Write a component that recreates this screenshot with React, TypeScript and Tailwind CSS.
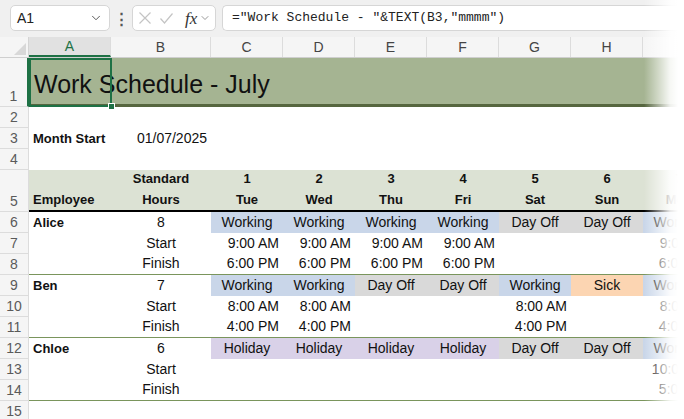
import { ChevronDown } from "lucide-react";

type Status = "W" | "O" | "H" | "S";

const STATUS: Record<Status, { label: string; bg: string }> = {
  W: { label: "Working", bg: "bg-[#c9d6e9]" },
  O: { label: "Day Off", bg: "bg-[#d9d9d9]" },
  H: { label: "Holiday", bg: "bg-[#d9d1e8]" },
  S: { label: "Sick", bg: "bg-[#fcd5b2]" },
};

const LETTERS = ["A", "B", "C", "D", "E", "F", "G", "H", "I"];
const WIDTHS = [
  "w-[82px]",
  "w-[100px]",
  "w-[72px]",
  "w-[72px]",
  "w-[72px]",
  "w-[72px]",
  "w-[72px]",
  "w-[72px]",
  "w-[72px]",
];

const DAYS = [
  { n: 1, d: "Tue" },
  { n: 2, d: "Wed" },
  { n: 3, d: "Thu" },
  { n: 4, d: "Fri" },
  { n: 5, d: "Sat" },
  { n: 6, d: "Sun" },
  { n: 7, d: "Mon" },
];

const PEOPLE: {
  name: string;
  hours: number;
  status: Status[];
  start: string[];
  finish: string[];
}[] = [
  {
    name: "Alice",
    hours: 8,
    status: ["W", "W", "W", "W", "O", "O", "W"],
    start: ["9:00 AM", "9:00 AM", "9:00 AM", "9:00 AM", "", "", "9:00 AM"],
    finish: ["6:00 PM", "6:00 PM", "6:00 PM", "6:00 PM", "", "", "6:00 PM"],
  },
  {
    name: "Ben",
    hours: 7,
    status: ["W", "W", "O", "O", "W", "S", "W"],
    start: ["8:00 AM", "8:00 AM", "", "", "8:00 AM", "", "8:00 AM"],
    finish: ["4:00 PM", "4:00 PM", "", "", "4:00 PM", "", "4:00 PM"],
  },
  {
    name: "Chloe",
    hours: 6,
    status: ["H", "H", "H", "H", "O", "O", "W"],
    start: ["", "", "", "", "", "", "10:00 AM"],
    finish: ["", "", "", "", "", "", "5:00 PM"],
  },
];

function RowHead({ n, className = "" }: { n: number; className?: string }) {
  return (
    <div
      className={`flex w-[29px] shrink-0 items-end justify-center border-r border-b border-[#dcdcdc] bg-[#f5f5f5] pb-[1px] text-[14px] leading-[17px] text-[#5a5a5a] ${className}`}
    >
      {n}
    </div>
  );
}

function Cell({
  col,
  align = "left",
  className = "",
  children,
}: {
  col: number;
  align?: "left" | "center" | "right";
  className?: string;
  children?: React.ReactNode;
}) {
  const a =
    align === "center"
      ? "justify-center"
      : align === "right"
        ? "justify-end pr-[4px]"
        : "justify-start pl-[4px]";
  return (
    <div
      className={`flex shrink-0 items-end whitespace-nowrap pb-[2px] leading-[17px] ${WIDTHS[col]} ${a} ${className}`}
    >
      {children}
    </div>
  );
}

function Row({
  n,
  h = "h-[21px]",
  line = "",
  children,
}: {
  n: number;
  h?: string;
  line?: string;
  children?: React.ReactNode;
}) {
  return (
    <div className={`flex ${h}`}>
      <RowHead n={n} />
      <div className={`flex flex-1 ${line}`}>{children}</div>
    </div>
  );
}

function PersonRows({ p, first }: { p: (typeof PEOPLE)[number]; first: number }) {
  return (
    <>
      <Row n={first}>
        <Cell col={0} className="text-[13px] font-bold">
          {p.name}
        </Cell>
        <Cell col={1} align="center">
          {p.hours}
        </Cell>
        {p.status.map((s, i) => (
          <Cell key={i} col={i + 2} align="center" className={STATUS[s].bg}>
            {STATUS[s].label}
          </Cell>
        ))}
      </Row>
      <Row n={first + 1}>
        <Cell col={0} />
        <Cell col={1} align="center">
          Start
        </Cell>
        {p.start.map((t, i) => (
          <Cell key={i} col={i + 2} align="right">
            {t}
          </Cell>
        ))}
      </Row>
      <Row n={first + 2} line="border-b-[1.5px] border-[#7a955c]">
        <Cell col={0} />
        <Cell col={1} align="center">
          Finish
        </Cell>
        {p.finish.map((t, i) => (
          <Cell key={i} col={i + 2} align="right">
            {t}
          </Cell>
        ))}
      </Row>
    </>
  );
}

export default function App() {
  return (
    <div className="relative h-[419px] w-[684px] overflow-hidden bg-white font-['Liberation_Sans',sans-serif] text-[14px] text-[#111]">
      {/* formula bar */}
      <div className="flex h-[37px] items-start gap-[4px] bg-[#f0f0f0] pl-[10px] pt-[5px]">
        <div className="flex h-[26px] w-[100px] items-center justify-between rounded-[5px] border border-[#d6d6d6] bg-white pl-[6px] pr-[6px] text-[14px] text-[#222]">
          <span>A1</span>
          <ChevronDown className="h-[14px] w-[14px] text-[#444]" strokeWidth={1.5} />
        </div>
        <div className="flex h-[26px] w-[14px] items-center justify-center text-[15px] font-bold leading-none text-[#555]">
          ⋮
        </div>
        <div className="flex h-[26px] w-[84px] items-center rounded-[5px] border border-[#d6d6d6] bg-white pl-[6px]">
          <svg width="12" height="12" viewBox="0 0 12 12" className="text-[#c4c4c4]">
            <path d="M0.5 0.5L11.5 11.5M11.5 0.5L0.5 11.5" stroke="currentColor" strokeWidth="1.2" fill="none" />
          </svg>
          <svg width="13" height="11" viewBox="0 0 13 11" className="ml-[9px] text-[#c4c4c4]">
            <path d="M0.5 5.5L4.5 10L12.5 0.5" stroke="currentColor" strokeWidth="1.2" fill="none" />
          </svg>
          <span className="ml-[12px] font-['Liberation_Serif',serif] text-[17px] italic leading-none text-[#333]">
            fx
          </span>
          <ChevronDown className="ml-[2px] h-[12px] w-[12px] text-[#777]" strokeWidth={1.5} />
        </div>
        <div className="ml-[2px] flex h-[26px] flex-1 items-center rounded-l-[5px] border border-r-0 border-[#d6d6d6] bg-white pl-[9px] font-['Liberation_Mono',monospace] text-[13px] text-[#222]">
          ="Work Schedule - "&amp;TEXT(B3,"mmmm")
        </div>
      </div>

      {/* column headers */}
      <div className="flex h-[21px] border-b border-[#cfcfcf] bg-[#f5f5f5] text-[14px] text-[#444]">
        <div className="relative w-[29px] shrink-0 border-r border-[#d4d4d4]">
          <div className="absolute right-[2px] bottom-[2px] h-0 w-0 border-b-[12px] border-l-[12px] border-b-[#d8d8d8] border-l-transparent" />
        </div>
        {LETTERS.map((l, i) => (
          <div
            key={l}
            className={`flex shrink-0 items-center justify-center border-r border-[#dcdcdc] ${WIDTHS[i]} ${
              i === 0
                ? "border-b-2 border-b-[#1e7145] bg-[#e1e1e1] text-[#1e7145]"
                : ""
            }`}
          >
            {l}
          </div>
        ))}
      </div>

      {/* row 1 */}
      <div className="relative flex h-[49px]">
        <RowHead
          n={1}
          className="border-r-2 border-r-[#1e7145] bg-[#a0d7b8] text-[#1e6b40]"
        />
        <div className="flex flex-1 items-end border-b-[3px] border-[#56663f] bg-[#a5b492] pb-[5px] pl-[5px] text-[25px] leading-[30px] text-[#111]">
          Work Schedule - July
        </div>
        <div className="absolute top-0 left-[29px] h-[49px] w-[83px] border-2 border-[#1e7145]" />
        <div className="absolute left-[108px] top-[45px] h-[7px] w-[7px] border border-white bg-[#1e7145]" />
      </div>

      <Row n={2} />
      <Row n={3}>
        <Cell col={0} className="text-[13px] font-bold">
          Month Start
        </Cell>
        <Cell col={1} align="right">
          01/07/2025
        </Cell>
      </Row>
      <Row n={4} />

      {/* row 5 header */}
      <Row n={5} h="h-[42px]" line="border-b-2 border-black bg-[#dce2d4]">
        <Cell col={0} className="text-[13px] font-bold">
          Employee
        </Cell>
        <Cell col={1} align="center" className="text-[13px] font-bold">
          <div className="flex flex-col items-center leading-[21px]">
            <span>Standard</span>
            <span className="-mb-[2px]">Hours</span>
          </div>
        </Cell>
        {DAYS.map((d, i) => (
          <Cell key={d.n} col={i + 2} align="center" className="text-[13px] font-bold">
            <div className="flex flex-col items-center leading-[21px]">
              <span>{d.n}</span>
              <span className="-mb-[2px]">{d.d}</span>
            </div>
          </Cell>
        ))}
      </Row>

      {PEOPLE.map((p, i) => (
        <PersonRows key={p.name} p={p} first={6 + i * 3} />
      ))}

      <Row n={15} />

      {/* right edge fade */}
      <div className="pointer-events-none absolute top-0 right-0 h-full w-[40px] bg-[linear-gradient(to_right,rgba(255,255,255,0)_0%,rgba(255,255,255,0.55)_40%,rgba(255,255,255,0.9)_65%,#fff_85%)]" />
    </div>
  );
}
